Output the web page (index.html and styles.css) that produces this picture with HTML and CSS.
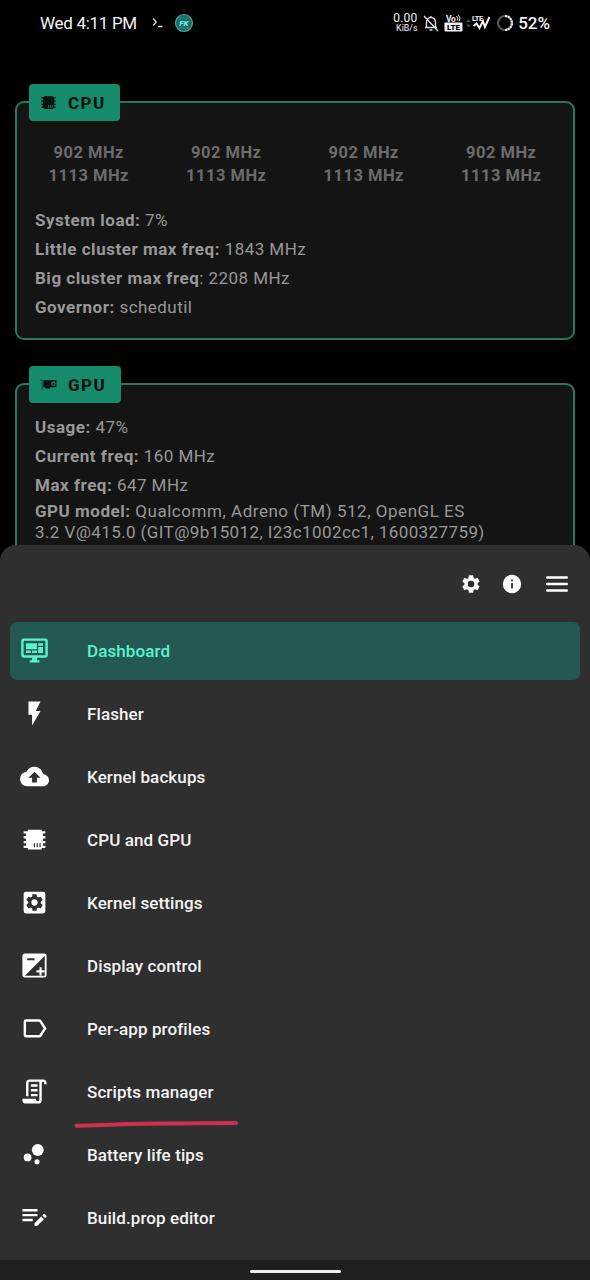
FILE: index.html
```html
<!DOCTYPE html>
<html lang="en">
<head>
<meta charset="utf-8">
<title>Dashboard</title>
<link rel="stylesheet" href="styles.css">
</head>
<body>
<div class="screen">
  <header class="status">
    <span class="clock">Wed 4:11 PM</span>
    <svg class="prompt" viewBox="0 0 12 12"><path d="M1.200 1.500l3 3.500-3 3.500M6 9.500h4.500" fill="none" stroke="#ddd" stroke-width="1.300"/></svg>
    <svg class="badge" viewBox="0 0 20 20"><circle cx="10" cy="10" r="8.500" fill="#176c68" stroke="#5c9c98" stroke-width="1.200"/><path d="M5 5h10M5 15h10" stroke="#278b82"/><text x="9.800" y="12.800" text-anchor="middle" class="badge-text">FK</text></svg>
    <span class="net"><span>0.00</span><span class="unit">KiB/s</span></span>
    <svg class="bell" viewBox="0 0 16 18"><path d="M3.500 13V8a4.500 4.500 0 0 1 9 0v5M2 13.500h12M6.500 16h3M8 2v2M1 2l14 15" fill="none" stroke="#ddd" stroke-width="1.400"/></svg>
    <svg class="volte" viewBox="0 0 19 18"><text x="2" y="7.500" class="vo">Vo</text><path d="M12.500 2q2 2 .8 4.500M14.300 .8q3 3 1 6.500" fill="none" stroke="#eee"/><rect x=".5" y="8.500" width="18" height="9" rx="1" fill="#f2f2f2"/><text x="9.500" y="16" text-anchor="middle" class="lte-dark">LTE</text></svg>
    <svg class="signal" viewBox="0 0 25 18"><path d="M0 8l2.500-3L5 8zM0 10.500h5l-2.500 3z" fill="#444"/><text x="6" y="6.500" class="lte">LTE</text><path d="M7.500 12l3-2.500 3 4.500 3.500-7 2 6 4.500-10" fill="none" stroke="#f5f5f5" stroke-width="2"/></svg>
    <svg class="ring" viewBox="0 0 18 18"><circle cx="9" cy="9" r="7" fill="none" stroke="#555" stroke-width="2.200"/><path d="M9 2a7 7 0 0 1 0 14" fill="none" stroke="#eee" stroke-width="2.200" stroke-dasharray="2.200 .6"/></svg>
    <span class="battery">52%</span>
  </header>

  <section class="card cpu">
    <h2 class="tag"><svg class="tag-icon" viewBox="0 0 24 24"><use href="#chip"/></svg><span>CPU</span></h2>
    <div class="cores">
      <div>902 MHz<br>1113 MHz</div><div>902 MHz<br>1113 MHz</div><div>902 MHz<br>1113 MHz</div><div>902 MHz<br>1113 MHz</div>
    </div>
    <p><b>System load:</b> 7%</p>
    <p><b>Little cluster max freq:</b> 1843 MHz</p>
    <p><b>Big cluster max freq</b>: 2208 MHz</p>
    <p><b>Governor:</b> schedutil</p>
  </section>

  <section class="card gpu">
    <h2 class="tag gpu-tag"><svg class="tag-icon" viewBox="0 0 24 24"><path d="M2 6h2.500v12h-1V7.500H2z" opacity=".7"/><path d="M5.500 6.500h16.500v9H5.500z"/><path d="M8 15h6v2H8z"/><circle cx="18.200" cy="11" r="2.700" fill="#168b6b"/><circle cx="18.200" cy="11" r="1.200"/></svg><span>GPU</span></h2>
    <p><b>Usage:</b> 47%</p>
    <p><b>Current freq:</b> 160 MHz</p>
    <p><b>Max freq:</b> 647 MHz</p>
    <p class="model"><span class="model-name"><b>GPU model:</b> Qualcomm, Adreno (TM) 512, OpenGL ES</span><br>3.2 V@415.0 (GIT@9b15012, I23c1002cc1, 1600327759)</p>
  </section>

  <div class="sheet">
    <div class="actions">
      <svg class="act" viewBox="0 0 24 24"><use href="#gear"/></svg>
      <svg class="act" viewBox="0 0 24 24"><path d="M12 2a10 10 0 1 0 0 20 10 10 0 0 0 0-20zm1 15h-2v-6h2zm0-8h-2V7h2z"/></svg>
      <svg class="burger" viewBox="0 0 22 16"><path d="M1.200 1.500h19.600M1.200 8h19.600M1.200 14.500h19.600"/></svg>
    </div>
    <nav class="menu">
      <a class="item active"><svg viewBox="0 0 24 24"><path d="M21 16V4H3v12h18m0-14a2 2 0 0 1 2 2v12a2 2 0 0 1-2 2h-7v2h2v2H8v-2h2v-2H3a2 2 0 0 1-2-2V4c0-1.110.89-2 2-2h18M5 6h9v5H5V6m10 0h4v2h-4V6m4 3v5h-4V9h4M5 12h4v2H5v-2m5 0h4v2h-4z"/></svg><span>Dashboard</span></a>
      <a class="item"><svg viewBox="0 0 24 24"><path d="M7 2v11h3v9l7-12h-4l4-8z"/></svg><span>Flasher</span></a>
      <a class="item"><svg viewBox="0 0 24 24"><path d="M19.350 10.040A7.490 7.490 0 0 0 12 4C9.110 4 6.600 5.640 5.350 8.040A5.994 5.994 0 0 0 0 14c0 3.310 2.690 6 6 6h13c2.760 0 5-2.240 5-5 0-2.640-2.050-4.780-4.650-4.960zM14 13v4h-4v-4H7l5-5 5 5h-3z"/></svg><span>Kernel backups</span></a>
      <a class="item"><svg viewBox="0 0 24 24"><path id="chip" fill-rule="evenodd" d="M6.500 4h11.500v1.200h3v1.900h-2v2.100h2v1.900h-2v2.100h2v1.900h-2v2.100h2v1.900h-3V20.200H6.500v-1.100H3v-1.900h2v-2.100H3v-1.900h2v-2.100H3V9.200h2V7.100H3V5.200h3.500zM11.500 15v3.500h1V15zm2.300 0v3.500h1V15zm2.300 0v3.500h1V15z"/></svg><span>CPU and GPU</span></a>
      <a class="item"><svg viewBox="0 0 24 24"><rect x="3" y="3" width="18" height="18" rx="2"/><g class="cut"><path id="gear" d="M19.140 12.940c.04-.3.060-.61.060-.94s-.02-.64-.07-.94l2.030-1.580a.49.49 0 0 0 .12-.61l-1.920-3.320a.488.488 0 0 0-.59-.22l-2.390.96c-.5-.38-1.030-.7-1.620-.94l-.36-2.540A.484.484 0 0 0 13.920 2.400h-3.840c-.24 0-.43.17-.47.41l-.36 2.540c-.59.24-1.130.57-1.620.94l-2.390-.96a.48.48 0 0 0-.59.22L2.740 8.870c-.12.21-.08.47.12.61l2.030 1.580c-.05.3-.09.63-.09.94s.02.64.07.94l-2.030 1.580a.49.49 0 0 0-.12.61l1.920 3.320c.12.22.37.29.59.22l2.390-.96c.5.38 1.030.7 1.620.94l.36 2.540c.05.24.24.41.48.41h3.840c.24 0 .44-.17.47-.41l.36-2.540c.59-.24 1.130-.56 1.620-.94l2.390.96c.22.08.47 0 .59-.22l1.920-3.320a.49.49 0 0 0-.12-.61zM12 15.600A3.600 3.600 0 1 1 12 8.400a3.600 3.600 0 0 1 0 7.200z"/></g></svg><span>Kernel settings</span></a>
      <a class="item"><svg viewBox="0 0 24 24"><path fill-rule="evenodd" d="M4 2h16a2 2 0 0 1 2 2v16a2 2 0 0 1-2 2H4a2 2 0 0 1-2-2V4c0-1.100.9-2 2-2zM20.500 4L4 20.500h16.500zM6 6v1.700h6V6z"/><path d="M16.100 13.500h1.800V16h2.500v1.800h-2.500v2.500h-1.800v-2.500h-2.500V16h2.500z"/></svg><span>Display control</span></a>
      <a class="item"><svg viewBox="0 0 24 24"><path d="M17.630 4.840A2 2 0 0 0 16 4H5a2 2 0 0 0-2 2v11c0 1.100.9 2 2 2h11c.67 0 1.270-.33 1.630-.84L22 11.500zM16 17H5V6h11l3.550 5.500z" transform="translate(0 .4)"/></svg><span>Per-app profiles</span></a>
      <a class="item"><svg viewBox="0 0 24 24"><path d="M15 20a1 1 0 0 0 1-1V4H8a1 1 0 0 0-1 1v11H5V5a3 3 0 0 1 3-3h11a3 3 0 0 1 3 3v1h-2V5a1 1 0 0 0-2 0v14a3 3 0 0 1-3 3H5a3 3 0 0 1-3-3v-1h11a2 2 0 0 0 2 2M9 6h5.500v2H9V6m0 4h5.500v2H9v-2m0 4h5.500v2H9z"/></svg><span>Scripts manager</span>
        <svg class="underline" viewBox="0 0 166 10"><path d="M3.500 6.700Q30 6 48 5.200T163 4" /></svg></a>
      <a class="item"><svg viewBox="0 0 24 24"><circle cx="6.300" cy="14.400" r="3.200"/><circle cx="14.700" cy="8.300" r="4.900"/><circle cx="14.100" cy="18" r="2.100"/></svg><span>Battery life tips</span></a>
      <a class="item"><svg viewBox="0 0 24 24"><path d="M2 5h12.500v2H2zm0 4h12.500v2H2zm0 4h8.500v2H2zm10 3.750V19h2.200l5.600-5.600-2.200-2.200zm9.700-5.250c.4-.4.4-.8 0-1.200l-1-1c-.4-.4-.8-.4-1.200 0l-1 1 2.200 2.200z"/></svg><span>Build.prop editor</span></a>
    </nav>
    <footer class="navbar"><i></i></footer>
  </div>
</div>
</body>
</html>
```
FILE: styles.css
```css
* { box-sizing: border-box; }
body { margin: 0; background: #000; font-family: Roboto, sans-serif; }
.screen { position: relative; width: 590px; height: 1280px; overflow: hidden; background: #000; }

.status { display: flex; align-items: center; height: 46px; padding: 0 40px; color: #f4f4f4; }
.clock { width: 112px; font-size: 17px; letter-spacing: -.3px; white-space: nowrap; }
.prompt { width: 12px; height: 12px; }
.badge { width: 20px; height: 20px; margin-left: 10px; }
.badge-text { font: italic 900 8px Roboto, sans-serif; fill: #72eadb; }
.net { display: flex; flex-direction: column; align-items: flex-end; width: 26px; margin-left: 198px; font-size: 12px; line-height: 11px; letter-spacing: .2px; }
.unit { font-size: 8.800px; line-height: 9px; letter-spacing: 0; }
.bell { width: 16px; height: 18px; margin-left: 6px; }
.volte { width: 19px; height: 18px; margin-left: 5px; }
.signal { width: 25px; height: 18px; margin-left: 3px; }
.vo { font: 700 8.500px Roboto, sans-serif; letter-spacing: -.3px; fill: #eee; }
.lte { font: 700 7.500px Roboto, sans-serif; letter-spacing: -.4px; fill: #eee; }
.lte-dark { font: 900 8px Roboto, sans-serif; fill: #000; }
.ring { width: 18px; height: 18px; margin-left: 5px; }
.battery { margin-left: 4px; font-size: 17px; font-weight: 500; }

.card { position: relative; margin: 0 15px; padding: 0 18px; border: 2px solid #297763; border-radius: 9px; background: #141414; color: #989898; font-size: 17px; letter-spacing: .45px; }
.cpu { height: 239px; margin-top: 55px; padding-top: 38px; }
.gpu { height: 220px; margin-top: 43px; padding-top: 28px; }
.card p { margin: 0; line-height: 29px; white-space: nowrap; }
.card b { font-weight: 700; letter-spacing: .52px; }
.card .model { line-height: 20.500px; margin-top: 1px; letter-spacing: .4px; }
.model-name { letter-spacing: .53px; }
.tag { position: absolute; left: 12px; top: -19px; display: flex; align-items: center; height: 37px; width: 91px; margin: 0; padding-left: 10px; border-radius: 4px; background: #168b6b; color: #07150f; font-size: 17px; font-weight: 800; letter-spacing: 1.400px; }
.gpu-tag { width: 92px; }
.tag-icon { width: 19px; height: 19px; margin: 0 10px 1px 0; fill: #07150f; }
.cores { display: grid; grid-template-columns: repeat(4, 1fr); margin: 0 -15px 19px; color: #6c6c6c; font-size: 16.500px; font-weight: 700; letter-spacing: .5px; line-height: 23px; text-align: center; }

.sheet { position: absolute; left: 0; top: 545px; width: 590px; height: 735px; display: flex; flex-direction: column; border-radius: 16px 16px 0 0; background: #2f2f2f; }
.actions { display: flex; justify-content: flex-end; align-items: center; height: 77px; padding-right: 22px; }
.act { width: 22px; height: 22px; margin-right: 19px; fill: #fff; }
.burger { width: 22px; height: 16px; margin-left: 4px; fill: none; stroke: #fff; stroke-width: 2.400; stroke-linecap: round; }
.menu { display: flex; flex-direction: column; gap: 5px; flex: 1; padding: 0 10px; }
.item { position: relative; display: flex; align-items: center; height: 58px; padding-left: 10px; border-radius: 7px; color: #f4f4f4; font-size: 17px; font-weight: 500; letter-spacing: .1px; }
.item > svg { width: 29px; height: 29px; margin: 0 38px 1px 0; fill: #fff; }
.item.active { background: #235952; color: #5df2ce; }
.item.active > svg { fill: #5df2ce; }
.cut { fill: #2f2f2f; transform: translate(12px, 12px) scale(.72) translate(-12px, -12px); }
.item > .underline { position: absolute; left: 63px; top: 56px; width: 166px; height: 10px; margin: 0; fill: none; stroke: #cf304f; stroke-width: 4; stroke-linecap: round; }
.navbar { display: flex; justify-content: center; align-items: center; height: 20px; padding-top: 2px; background: #1f1f1f; }
.navbar i { width: 91px; height: 3px; border-radius: 2px; background: #f4eef1; }
```
